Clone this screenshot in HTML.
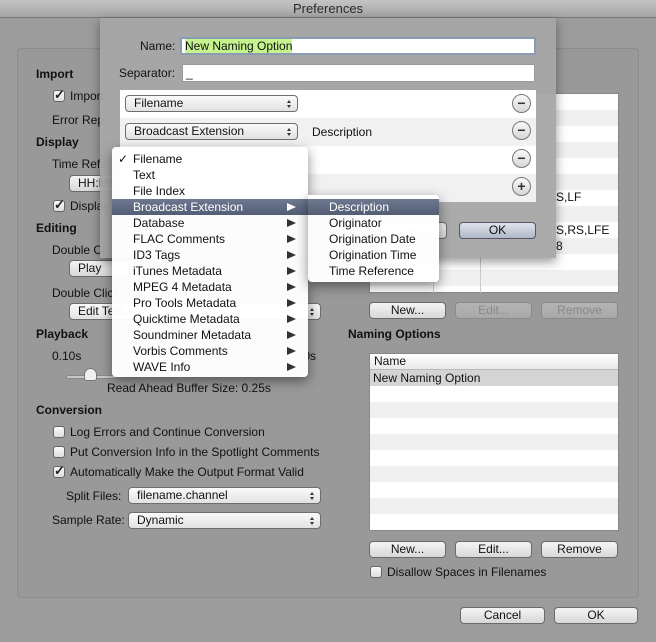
<!DOCTYPE html>
<html><head><meta charset="utf-8"><style>
*{box-sizing:border-box;margin:0;padding:0}
body{width:656px;height:642px;overflow:hidden;background:#9c9c9c;font-family:"Liberation Sans",sans-serif;font-size:12px;color:#111;position:relative}
.a{position:absolute;white-space:nowrap}
.b{font-weight:bold}
.btn{position:absolute;height:17px;border:1px solid #6a6a6a;border-radius:4px;background:linear-gradient(#f4f4f4,#d8d8d8);text-align:center;line-height:15px;font-size:12px}
.dis{color:#888;border-color:#8a8a8a;background:linear-gradient(#b4b4b4,#a8a8a8)}
.pop{position:absolute;height:17px;border:1px solid #6e6e6e;border-radius:4px;background:linear-gradient(#fafafa,#e2e2e2);line-height:15px;padding-left:8px;font-size:12px}
.pop:after{content:"";position:absolute;right:6px;top:4px;width:0;height:0;border-left:2.5px solid transparent;border-right:2.5px solid transparent;border-bottom:3px solid #333}
.pop:before{content:"";position:absolute;right:6px;top:9px;width:0;height:0;border-left:2.5px solid transparent;border-right:2.5px solid transparent;border-top:3px solid #333}
.cb{position:absolute;width:12px;height:12px;border:1px solid #666;border-radius:3px;background:linear-gradient(#fafafa,#dcdcdc)}
.ck:after{content:"✓";position:absolute;left:0;top:-4px;font-size:13px;font-weight:bold;color:#222}
.circ{position:absolute;width:19px;height:19px;border:1px solid #777;border-radius:50%;background:linear-gradient(#fafafa,#d6d6d6);text-align:center;line-height:16px;font-weight:bold;font-size:14px;color:#333}
.mi{position:absolute;left:0;width:196px;height:16px;line-height:16px;padding-left:21px}
.mi i{position:absolute;right:12px;top:4px;width:0;height:0;border-top:4.5px solid transparent;border-bottom:4.5px solid transparent;border-left:9px solid #333}
</style></head><body>
<!-- title bar -->
<div class="a" style="left:0;top:0;width:656px;height:18px;background:linear-gradient(#c4c4c4,#a4a4a4);border-bottom:1px solid #7a7a7a"></div>
<div class="a" style="left:0;top:1px;width:656px;text-align:center;font-size:13px;color:#2a2a2a">Preferences</div>
<!-- group box -->
<div class="a" style="left:17px;top:48px;width:622px;height:550px;border:1px solid #8c8c8c;border-radius:4px;background:#999"></div>

<div class="a b" style="left:36px;top:67px">Import</div>
<div class="cb ck" style="left:53px;top:90px"></div><div class="a" style="left:70px;top:89px">Import</div>
<div class="a" style="left:52px;top:113px">Error Rep</div>
<div class="a b" style="left:36px;top:135px">Display</div>
<div class="a" style="left:52px;top:157px">Time Refe</div>
<div class="btn" style="left:69px;top:175px;width:60px;text-align:left;padding-left:8px">HH:MM</div>
<div class="cb ck" style="left:53px;top:200px"></div><div class="a" style="left:70px;top:199px">Display</div>
<div class="a b" style="left:36px;top:221px">Editing</div>
<div class="a" style="left:52px;top:243px">Double Cl</div>
<div class="btn" style="left:69px;top:260px;width:60px;text-align:left;padding-left:8px">Play</div>
<div class="a" style="left:52px;top:286px">Double Click</div>
<div class="pop" style="left:69px;top:303px;width:252px">Edit Text</div>
<div class="a b" style="left:36px;top:327px">Playback</div>
<div class="a" style="left:52px;top:349px">0.10s</div>
<div class="a" style="left:300px;top:349px">.0s</div>
<div class="a" style="left:66px;top:375px;width:50px;height:4px;border-radius:2px;background:#c8c8c8;border:1px solid #888"></div>
<div class="a" style="left:84px;top:368px;width:13px;height:13px;background:#f0f0f0;border:1px solid #777;border-radius:7px 7px 3px 3px"></div>
<div class="a" style="left:107px;top:381px">Read Ahead Buffer Size: 0.25s</div>
<div class="a b" style="left:36px;top:403px">Conversion</div>
<div class="cb" style="left:53px;top:426px"></div><div class="a" style="left:70px;top:425px">Log Errors and Continue Conversion</div>
<div class="cb" style="left:53px;top:446px"></div><div class="a" style="left:70px;top:445px">Put Conversion Info in the Spotlight Comments</div>
<div class="cb ck" style="left:53px;top:466px"></div><div class="a" style="left:70px;top:465px">Automatically Make the Output Format Valid</div>
<div class="a" style="left:66px;top:489px">Split Files:</div>
<div class="pop" style="left:128px;top:487px;width:193px">filename.channel</div>
<div class="a" style="left:52px;top:513px">Sample Rate:</div>
<div class="pop" style="left:128px;top:512px;width:193px">Dynamic</div>

<!-- right top table -->
<div class="a" style="left:369px;top:93px;width:250px;height:200px;background:repeating-linear-gradient(#fff 0 16px,#f0f0f0 16px 32px);border:1px solid #888"></div>
<div class="a" style="left:433px;top:110px;width:1px;height:183px;background:#ccc"></div>
<div class="a" style="left:480px;top:110px;width:1px;height:183px;background:#ccc"></div>
<div class="a" style="left:556px;top:190px">S,LF</div>
<div class="a" style="left:556px;top:223px">S,RS,LFE</div>
<div class="a" style="left:556px;top:239px">8</div>
<div class="btn" style="left:369px;top:302px;width:77px">New...</div>
<div class="btn dis" style="left:455px;top:302px;width:77px">Edit...</div>
<div class="btn dis" style="left:541px;top:302px;width:77px">Remove</div>
<div class="a b" style="left:348px;top:327px">Naming Options</div>
<div class="a" style="left:369px;top:353px;width:250px;height:178px;background:repeating-linear-gradient(#fff 0 16px,#f0f0f0 16px 32px);border:1px solid #888"></div>
<div class="a" style="left:370px;top:354px;width:248px;height:16px;background:linear-gradient(#fff,#e8e8e8);border-bottom:1px solid #bbb;padding-left:4px;line-height:15px">Name</div>
<div class="a" style="left:370px;top:370px;width:248px;height:16px;background:#d4d4d4;padding-left:3px;line-height:16px">New Naming Option</div>
<div class="btn" style="left:369px;top:541px;width:77px">New...</div>
<div class="btn" style="left:455px;top:541px;width:77px">Edit...</div>
<div class="btn" style="left:541px;top:541px;width:77px">Remove</div>
<div class="cb" style="left:370px;top:566px"></div><div class="a" style="left:387px;top:565px">Disallow Spaces in Filenames</div>
<div class="btn" style="left:460px;top:607px;width:85px">Cancel</div>
<div class="btn" style="left:554px;top:607px;width:84px">OK</div>

<!-- sheet -->
<div class="a" style="left:100px;top:18px;width:456px;height:240px;background:rgba(166,166,166,0.95);box-shadow:0 4px 10px rgba(0,0,0,.4)"></div>
<div class="a" style="left:140px;top:39px">Name:</div>
<div class="a" style="left:180px;top:37px;width:356px;height:18px;background:#fff;border:2px solid #8a9bb4;padding-left:3px;line-height:14px"><span style="background:#c6f38e">New Naming Option</span></div>
<div class="a" style="left:119px;top:66px">Separator:</div>
<div class="a" style="left:182px;top:64px;width:353px;height:18px;background:#fff;border:1px solid #999;padding-left:3px;line-height:16px">_</div>
<div class="a" style="left:120px;top:90px;width:416px;height:112px;background:repeating-linear-gradient(#fff 0 28px,#f1f1f1 28px 56px)"></div>
<div class="pop" style="left:125px;top:95px;width:173px">Filename</div>
<div class="pop" style="left:125px;top:123px;width:173px">Broadcast Extension</div>
<div class="a" style="left:312px;top:125px">Description</div>
<div class="circ" style="left:512px;top:94px">−</div>
<div class="circ" style="left:512px;top:121px">−</div>
<div class="circ" style="left:512px;top:149px">−</div>
<div class="circ" style="left:512px;top:177px">+</div>
<div class="btn" style="left:380px;top:222px;width:67px;color:#999">Cancel</div>
<div class="btn" style="left:459px;top:222px;width:77px;background:linear-gradient(#dfe4ec,#aeb8c8);border-color:#556">OK</div>

<!-- menu -->
<div class="a" style="left:112px;top:147px;width:196px;height:230px;background:rgba(255,255,255,0.97);border-radius:4px;box-shadow:0 4px 12px rgba(0,0,0,.45)">
<div class="mi" style="top:4px"><span style="position:absolute;left:6px">✓</span>Filename</div>
<div class="mi" style="top:20px">Text</div>
<div class="mi" style="top:36px">File Index</div>
<div class="mi" style="top:52px;background:linear-gradient(#6e7890,#535d74);color:#fff">Broadcast Extension<i style="border-left-color:#fff"></i></div>
<div class="mi" style="top:68px">Database<i></i></div>
<div class="mi" style="top:84px">FLAC Comments<i></i></div>
<div class="mi" style="top:100px">ID3 Tags<i></i></div>
<div class="mi" style="top:116px">iTunes Metadata<i></i></div>
<div class="mi" style="top:132px">MPEG 4 Metadata<i></i></div>
<div class="mi" style="top:148px">Pro Tools Metadata<i></i></div>
<div class="mi" style="top:164px">Quicktime Metadata<i></i></div>
<div class="mi" style="top:180px">Soundminer Metadata<i></i></div>
<div class="mi" style="top:196px">Vorbis Comments<i></i></div>
<div class="mi" style="top:212px">WAVE Info<i></i></div>
</div>
<div class="a" style="left:308px;top:195px;width:131px;height:87px;background:rgba(255,255,255,0.97);border-radius:0 4px 4px 4px;box-shadow:0 4px 12px rgba(0,0,0,.45)">
<div class="mi" style="top:4px;width:131px;padding-left:21px;background:linear-gradient(#6e7890,#535d74);color:#fff">Description</div>
<div class="mi" style="top:20px;width:131px">Originator</div>
<div class="mi" style="top:36px;width:131px">Origination Date</div>
<div class="mi" style="top:52px;width:131px">Origination Time</div>
<div class="mi" style="top:68px;width:131px">Time Reference</div>
</div>
</body></html>
